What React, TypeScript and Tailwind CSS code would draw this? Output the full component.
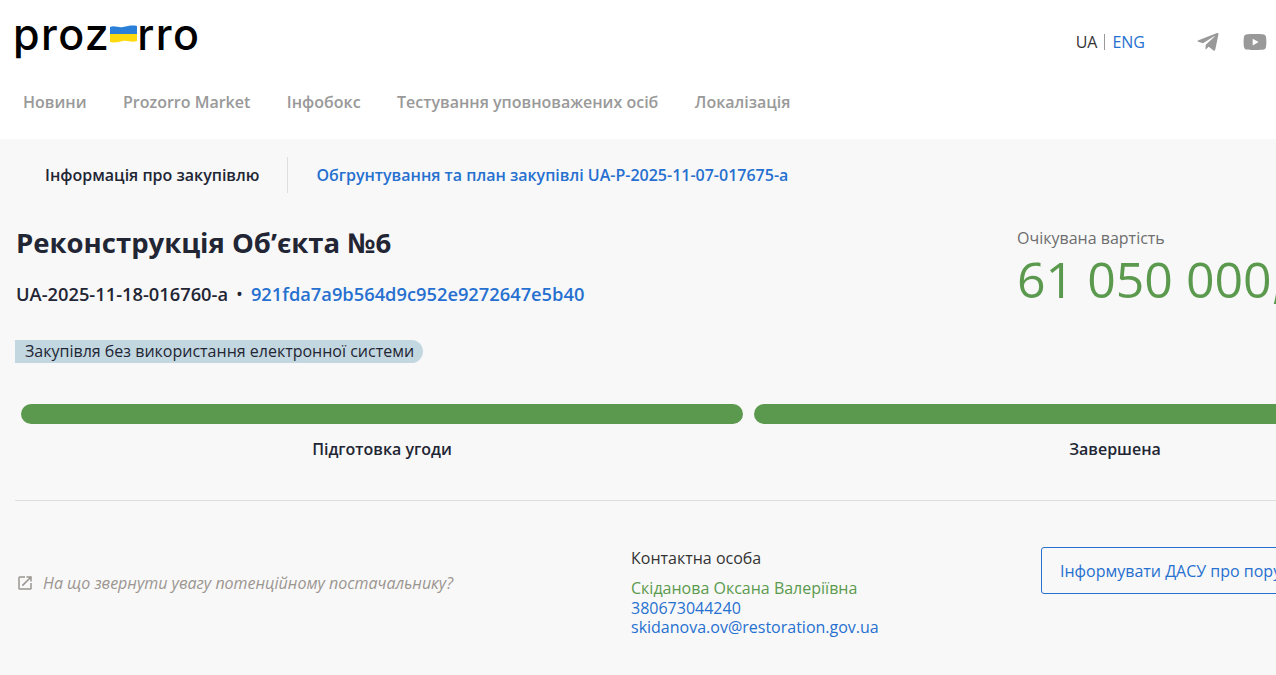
import { FaTelegramPlane, FaYoutube } from "react-icons/fa";
import { MdOpenInNew } from "react-icons/md";

const navItems = ["Новини", "Prozorro Market", "Інфобокс", "Тестування уповноважених осіб", "Локалізація"];

const Logo = () => (
  <div className="flex items-center pb-[4px] font-['Inter',sans-serif] font-medium text-[43px] leading-none tracking-[1.4px] text-black h-[40px]">
    <span>proz</span>
    <svg width="27" height="18" viewBox="0 0 27 18" className="-mt-[1px]">
      <path d="M0 2 C5 0 8 3 13 2 S22 0 27 1 V9 H0 Z" fill="#2a7fd8" />
      <path d="M0 9 H27 V16 C22 18 17 15 13 16 S4 18 0 17 Z" fill="#fbd90e" />
    </svg>
    <span>rro</span>
  </div>
);

export default function App() {
  return (
    <div className="w-[1276px] h-[675px] overflow-hidden bg-[#f8f8f8] font-['Open_Sans',sans-serif] text-[#222534]">
      <div className="w-[1520px]">
        <header className="bg-white h-[139px] pt-[16px]">
          <div className="flex w-[1276px] justify-between pl-[13px] pr-[9px]">
            <Logo />
            <div className="flex items-center pt-[11px] h-[40px]">
              <span className="text-base text-[#333] pr-[7px] border-r border-[#999] leading-[16px]">UA</span>
              <span className="text-base text-[#2670d0] pl-[7px] leading-[16px]">ENG</span>
              <FaTelegramPlane className="ml-[51px] text-[#999] text-[24px]" />
              <FaYoutube className="ml-[23px] text-[#999] text-[24px]" />
            </div>
          </div>
          <nav className="flex gap-[36.5px] pl-[23px] mt-[35px]">
            {navItems.map((item) => (
              <a key={item} className="text-base font-semibold text-[#999] leading-[22px]">
                {item}
              </a>
            ))}
          </nav>
        </header>

        <div className="flex items-center pl-[45px] pt-[18px]">
          <span className="text-base font-semibold text-[#222534] pr-[28px] border-r border-[#dedede] leading-[36px]">
            Інформація про закупівлю
          </span>
          <a className="text-base font-semibold text-[#2670d0] pl-[28px]">
            Обгрунтування та план закупівлі UA-P-2025-11-07-017675-a
          </a>
        </div>

        <div className="flex pl-[16px] pt-[30px]">
          <div className="w-[1001px]">
            <h1 className="text-[27.5px] font-bold leading-[40px] text-[#222534]">Реконструкція Об’єкта №6</h1>
            <div className="flex items-center mt-[18px] text-[18.3px] leading-[26px]">
              <span className="font-semibold">UA-2025-11-18-016760-a</span>
              <span className="mx-[8px]">•</span>
              <a className="font-semibold text-[#2670d0]">921fda7a9b564d9c952e9272647e5b40</a>
            </div>
          </div>
          <div className="pt-[5px]">
            <div className="text-base text-[#6e6e6e] leading-[20px]">Очікувана вартість</div>
            <div className="text-[50px] leading-[62px] text-[#5b9a4e] whitespace-nowrap">61 050 000,00</div>
          </div>
        </div>

        <div className="pl-[15px] mt-[29px]">
          <span className="inline-block bg-[#c3d7e0] rounded-r-full rounded-l-[3px] pl-[10px] pr-[9px] text-base leading-[23px] text-[#222534]">
            Закупівля без використання електронної системи
          </span>
        </div>

        <div className="flex gap-[11px] pl-[21px] mt-[41px]">
          {["Підготовка угоди", "Завершена"].map((label) => (
            <div key={label} className="w-[722px]">
              <div className="h-[20px] rounded-full bg-[#5b9a4e]" />
              <div className="text-center text-base font-semibold leading-[22px] mt-[14px]">{label}</div>
            </div>
          ))}
        </div>

        <div className="w-[1276px] pl-[15px] mt-[40px]">
          <div className="border-t border-[#dedede]" />
        </div>

        <div className="flex pl-[16px] pt-[46px]">
          <div className="w-[615px] flex items-center gap-[9px] pt-[15px] h-[57px] self-start">
            <MdOpenInNew className="text-[#9b9590] text-[18px]" />
            <a className="italic text-base text-[#9b9590]">На що звернути увагу потенційному постачальнику?</a>
          </div>
          <div className="w-[410px]">
            <div className="text-base leading-[22px] text-[#333]">Контактна особа</div>
            <div className="text-base leading-[19px] text-[#5b9a4e] mt-[10px]">Скіданова Оксана Валеріївна</div>
            <div className="text-base leading-[19px] text-[#2670d0] mt-[1px]">380673044240</div>
            <div className="text-base leading-[19px] text-[#2670d0]">skidanova.ov@restoration.gov.ua</div>
          </div>
          <a className="h-[47px] flex items-center px-[18px] border border-[#2670d0] rounded-[3px] text-base text-[#2670d0] whitespace-nowrap">
            Інформувати ДАСУ про порушення
          </a>
        </div>
      </div>
    </div>
  );
}
